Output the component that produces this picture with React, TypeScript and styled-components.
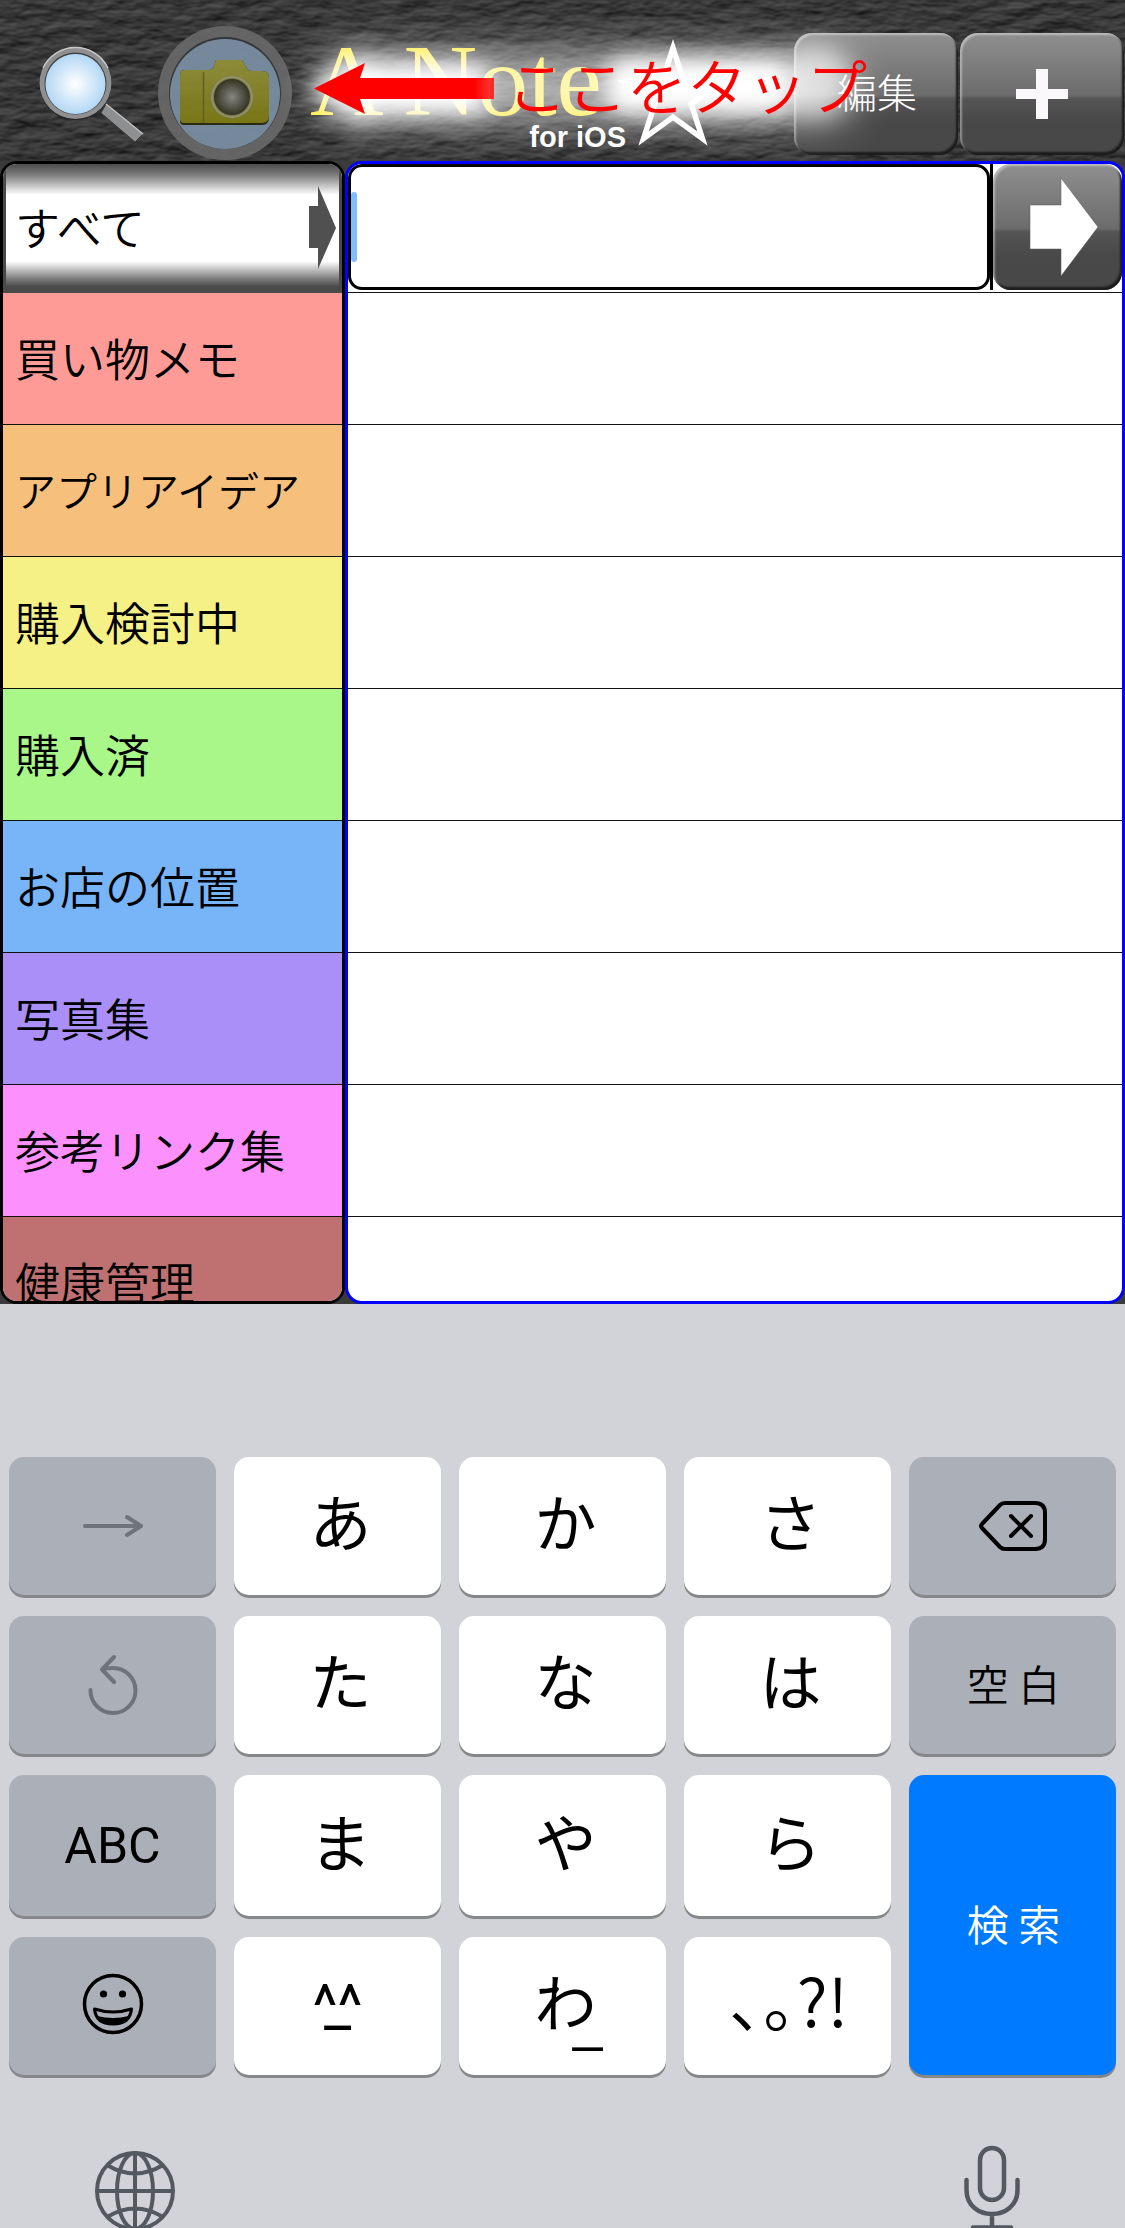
import React from "react";
import styled, { createGlobalStyle } from "styled-components";

const jp = `"Noto Sans CJK JP", sans-serif`;

const GlobalStyle = createGlobalStyle`
  * { box-sizing: border-box; }
  body { margin: 0; background: #d1d3d9; font-family: ${jp}; }
  button { margin: 0; padding: 0; border: 0; background: none; color: inherit; font: inherit; cursor: pointer; }
  ul { margin: 0; padding: 0; list-style: none; }
  svg { display: block; }
`;

const Page = styled.div`
  display: flex;
  flex-direction: column;
  height: 100vh;
  overflow: hidden;
  background: #3a3a3a;
`;

/* ---------- header ---------- */

const Header = styled.header`
  position: relative;
  display: flex;
  flex: none;
  align-items: flex-start;
  height: 161px;
  padding: 26px 1px 0 36px;
`;

const Leather = styled.svg`
  position: absolute;
  inset: 0;
  width: 100%;
  height: 100%;
`;

const ToolGroup = styled.div`
  position: relative;
  display: flex;
  gap: 11px;
  margin-right: 17px;
`;

const Brand = styled.div`
  position: relative;
  display: flex;
  flex: 1;
`;

const BrandText = styled.h1`
  display: flex;
  flex-direction: column;
  width: 316px;
  margin: 0;
  padding-top: 11px;
  white-space: nowrap;
`;

const BrandName = styled.span`
  font: 400 102px/88px "Liberation Serif", serif;
  color: #ffeb3f;
`;

const BrandSub = styled.span`
  align-self: flex-end;
  font: 700 29px/24px "Liberation Sans", sans-serif;
  color: #fff;
`;

const StarIcon = styled.svg`
  margin-left: -9px;
`;

const HeaderButtons = styled.div`
  position: relative;
  display: flex;
  gap: 2px;
  padding-top: 7px;
`;

const Glossy = styled.button`
  display: flex;
  align-items: center;
  justify-content: center;
  border-radius: 18px;
  background: linear-gradient(#8f8f8f, #6c6c6c 51%, #545454 54%, #484848 75%, #484848);
  box-shadow: inset 2px 2px 2px rgba(255, 255, 255, 0.4), inset -2px -3px 2px #1c1c1c;
  color: #fff;
`;

const HeaderButton = styled(Glossy)`
  width: 164px;
  height: 122px;
`;

const EditButton = styled(HeaderButton)`
  padding: 0 0 6px 2px;
  font-size: 40px;
  font-weight: 300;
`;

const Hint = styled.div`
  position: absolute;
  top: 0;
  left: 200px;
  width: 760px;
  height: 161px;
  overflow: hidden;
  pointer-events: none;
`;

const HintText = styled.p`
  position: absolute;
  top: 40px;
  left: 307px;
  margin: 0;
  font: 350 60px/88px ${jp};
  color: #f00;
  white-space: nowrap;
`;

/* ---------- panels ---------- */

const Panels = styled.main`
  display: flex;
  flex: 1;
  min-height: 0;
`;

const Panel = styled.section<{ $line: string; $grow?: boolean }>`
  flex: ${(p) => (p.$grow ? "1" : "0 0 345px")};
  min-width: 0;
  overflow: hidden;
  border: 3px solid ${(p) => p.$line};
  border-radius: 17px;
  background: #fff;
`;

const AllButton = styled.button`
  display: flex;
  align-items: center;
  justify-content: space-between;
  width: 100%;
  height: 129px;
  padding: 0 2px 0 9px;
  border: solid #4a4a4a;
  border-width: 0 3px 1px;
  background: linear-gradient(#4c4c4c, #787878 8%, #fff 24%, #fff 76%, #787878 90%, #4a4a4a 96%);
  font-size: 45px;
  font-weight: 350;
`;

const AllLabel = styled.span`
  padding-bottom: 4px;
`;

const CategoryButton = styled.button<{ $color: string; $small?: boolean }>`
  display: block;
  width: 100%;
  height: 132px;
  padding: 0 0 3px 12px;
  border-bottom: 1px solid #111;
  background: ${(p) => p.$color};
  font-size: ${(p) => (p.$small ? 41 : 45)}px;
  font-weight: 350;
  text-align: left;
  white-space: nowrap;
`;

const SearchRow = styled.form`
  display: flex;
  height: 129px;
  padding-bottom: 2px;
  border-bottom: 1px solid #111;
`;

const SearchBox = styled.label`
  display: flex;
  flex: 1;
  align-items: center;
  border: 3px solid #000;
  border-radius: 14px;
`;

const Caret = styled.span`
  width: 6px;
  height: 70px;
  border-radius: 3px;
  background: #80bcff;
`;

const SearchInput = styled.input`
  flex: 1;
  min-width: 0;
  height: 100%;
  border: 0;
  outline: 0;
  background: transparent;
  font: 300 44px ${jp};
`;

const GoWrap = styled.div`
  display: flex;
  border-left: 3px solid #000;
`;

const GoButton = styled(Glossy)`
  width: 129px;
  padding-left: 12px;
`;

const EmptyRow = styled.li`
  height: 132px;
  border-bottom: 1px solid #111;
`;

/* ---------- keyboard ---------- */

const Keyboard = styled.section`
  flex: none;
  padding-top: 153px;
  background: #d1d3d9;
`;

const Keys = styled.div`
  display: grid;
  grid-template-columns: repeat(5, 1fr);
  grid-template-rows: 138px 138px 141px 138px;
  gap: 21px 18px;
  padding: 0 9px;
`;

const Key = styled.button`
  display: grid;
  place-items: center;
  border-radius: 15px;
  background: #abafb8;
  box-shadow: 0 3px 0 #868789;
  color: #000;
`;

const WordKey = styled(Key)`
  padding: 0 0 6px 2px;
  font-size: 42px;
  font-weight: 350;
`;

const KanaKey = styled(Key)`
  padding: 0 0 12px 6px;
  background: #fff;
  font-size: 62px;
  font-weight: 400;
`;

const PunctuationKey = styled(KanaKey)`
  padding: 0 0 16px 4px;
  font-size: 66px;
  font-weight: 350;
`;

const LatinKey = styled(Key)`
  font-family: Roboto, sans-serif;
  font-size: 50px;
  font-weight: 400;
`;

const SearchKey = styled(WordKey)`
  grid-row: 3 / span 2;
  grid-column: 5;
  background: #007aff;
  color: #fff;
`;

const FaceKey = styled(Key)`
  background: #fff;
  font: 400 60px/60px Roboto, sans-serif;
`;

const FaceMark = styled.span`
  grid-area: 1 / 1;
`;

const SubMark = styled.span`
  position: absolute;
  right: 63px;
  bottom: 16px;
  font: 300 72px/72px Roboto, sans-serif;
`;

const WaKey = styled(KanaKey)`
  position: relative;
`;

const KeyboardFooter = styled.footer`
  display: flex;
  align-items: flex-start;
  justify-content: space-between;
  height: 153px;
  padding: 70px 103px 0 95px;
  overflow: hidden;
`;

const categories = [
  { name: "買い物メモ", color: "#ff9b96" },
  { name: "アプリアイデア", color: "#f6bf7c", small: true },
  { name: "購入検討中", color: "#f5f186" },
  { name: "購入済", color: "#a8f788" },
  { name: "お店の位置", color: "#77b5f8" },
  { name: "写真集", color: "#aa8ff8" },
  { name: "参考リンク集", color: "#fc91fd" },
  { name: "健康管理", color: "#be7170" },
];

function LeatherTexture() {
  return (
    <Leather aria-hidden="true">
      <filter id="leather" x="0" y="0" width="100%" height="100%" colorInterpolationFilters="sRGB">
        <feTurbulence type="fractalNoise" baseFrequency="0.035 0.08" numOctaves="3" seed="8" />
        <feDiffuseLighting surfaceScale="2" diffuseConstant="1" lightingColor="#5c5c5c">
          <feDistantLight azimuth="250" elevation="38" />
        </feDiffuseLighting>
      </filter>
      <rect width="100%" height="100%" filter="url(#leather)" />
    </Leather>
  );
}

function Magnifier() {
  return (
    <svg width="110" height="136" viewBox="36 26 110 136">
      <defs>
        <radialGradient id="lens">
          <stop offset="0" stopColor="#fff" />
          <stop offset="1" stopColor="#b3d7f5" />
        </radialGradient>
      </defs>
      <path d="M106 104 L143 134 L135 142 L101 113 Z" fill="#8d8f91" stroke="#3a3a3a" strokeWidth="1" />
      <path d="M106 104 L143 134" stroke="#c4c4c4" strokeWidth="1.5" />
      <circle cx="75.500" cy="84" r="36" fill="#222" />
      <circle cx="75.500" cy="83" r="36" fill="#8d8f91" />
      <path d="M43 68 A36 36 0 0 1 108 68" fill="none" stroke="#c8c8c8" strokeWidth="1.500" />
      <circle cx="75.500" cy="83.500" r="31" fill="#444" />
      <circle cx="75.500" cy="84" r="30" fill="url(#lens)" />
    </svg>
  );
}

function Camera() {
  return (
    <svg width="136" height="136" viewBox="157 26 136 136">
      <defs>
        <radialGradient id="glass">
          <stop offset="0" stopColor="#8c8c88" />
          <stop offset="0.55" stopColor="#5b5b50" />
          <stop offset="1" stopColor="#34341f" />
        </radialGradient>
        <linearGradient id="body" x1="0" y1="0" x2="0" y2="1">
          <stop offset="0" stopColor="#93923c" />
          <stop offset="1" stopColor="#7e7b14" />
        </linearGradient>
      </defs>
      <g opacity="0.93">
        <circle cx="225" cy="93" r="67" fill="#686868" />
        <circle cx="225" cy="93" r="56" fill="#343638" />
        <circle cx="225" cy="94" r="55" fill="#7b8fa3" />
        <path d="M180 75 Q180 70 185 70 H209 Q213 70 214 66 L216 60 H242 L246 67 Q248 71 252 71 H262 Q269 71 269 78 V117 Q269 125 262 125 H184 Q180 125 180 121 Z" fill="#292b10" />
        <path d="M180 75 Q180 70 185 70 H209 Q213 70 214 66 L216 60 H242 L246 67 Q248 71 252 71 H262 Q269 71 269 78 V115 Q269 123 262 123 H184 Q180 123 180 119 Z" fill="url(#body)" />
        <path d="M203.500 72 V123" stroke="#64631f" strokeWidth="1.500" />
        <circle cx="232" cy="97" r="21.500" fill="#7e7e4f" />
        <circle cx="232" cy="97" r="20" fill="none" stroke="#99986b" strokeWidth="2" />
        <circle cx="232" cy="97" r="18" fill="url(#glass)" />
      </g>
    </svg>
  );
}

function starPoints(cx: number, cy: number, outer: number) {
  return Array.from({ length: 10 }, (_, i) => {
    const r = i % 2 ? outer * 0.382 : outer;
    const a = (Math.PI * i) / 5 - Math.PI / 2;
    return `${cx + r * Math.cos(a)},${cy + r * Math.sin(a)}`;
  }).join(" ");
}

function Star() {
  return (
    <StarIcon width="112" height="124" viewBox="617 26 112 124" aria-hidden="true">
      <polygon points={starPoints(673, 98, 50)} fill="none" stroke="#fff" strokeWidth="5.500" strokeMiterlimit="8" />
    </StarIcon>
  );
}

function HintGlow() {
  return (
    <svg width="760" height="161" viewBox="200 0 760 161" aria-hidden="true">
      <defs>
        <filter id="soft" x="-30%" y="-150%" width="160%" height="400%">
          <feGaussianBlur stdDeviation="20" />
        </filter>
        <filter id="tight" x="-30%" y="-150%" width="160%" height="400%">
          <feGaussianBlur stdDeviation="11" />
        </filter>
        <linearGradient id="tail" x1="0" x2="1">
          <stop offset="0" stopColor="#f00" />
          <stop offset="1" stopColor="#f00" stopOpacity="0.75" />
        </linearGradient>
      </defs>
      <rect x="320" y="52" width="530" height="70" rx="24" fill="#fff" opacity="0.62" filter="url(#soft)" />
      <path d="M308 88 L362 54 L372 64 H486 V114 H372 L362 124 Z" fill="#fff" filter="url(#tight)" />
      <rect x="606" y="58" width="185" height="56" rx="18" fill="#fff" filter="url(#tight)" />
      <ellipse cx="815" cy="82" rx="36" ry="34" fill="#fff" opacity="0.5" filter="url(#tight)" />
      <path d="M314 88.500 L365 63 L360 78 H474 V99 H360 L365 114 Z" fill="#f00" />
      <rect x="474" y="78" width="20" height="21" fill="url(#tail)" />
    </svg>
  );
}

function Globe() {
  return (
    <svg width="80" height="88" viewBox="95 2145 80 88" fill="none" stroke="#53595f" strokeWidth="4">
      <circle cx="135" cy="2191" r="38" />
      <ellipse cx="135" cy="2191" rx="18" ry="38" />
      <path d="M135 2153 V2229 M97 2191 H173 M107 2165 Q135 2182 163 2165 M107 2217 Q135 2200 163 2217" />
    </svg>
  );
}

function Mic() {
  return (
    <svg width="60" height="88" viewBox="962 2145 60 88" fill="none" stroke="#53595f" strokeWidth="4.500" strokeLinecap="round">
      <rect x="980" y="2148" width="24" height="52" rx="12" />
      <path d="M966.500 2180 V2190 C966.500 2222 1017.500 2222 1017.500 2190 V2180 M992 2214 V2227 M973 2227.500 H1011" />
    </svg>
  );
}

const Kana = ({ children }: { children: string }) => <KanaKey type="button">{children}</KanaKey>;

export default function App() {
  return (
    <>
      <GlobalStyle />
      <Page>
        <Header>
          <LeatherTexture />
          <ToolGroup>
            <button type="button" aria-label="検索を開く">
              <Magnifier />
            </button>
            <button type="button" aria-label="カメラ">
              <Camera />
            </button>
          </ToolGroup>
          <Brand>
            <BrandText>
              <BrandName>A Note</BrandName>
              <BrandSub>for iOS</BrandSub>
            </BrandText>
            <Star />
          </Brand>
          <HeaderButtons>
            <EditButton type="button">編集</EditButton>
            <HeaderButton type="button" aria-label="追加">
              <svg width="52" height="50" viewBox="0 0 52 50">
                <path d="M20 0 H32 V20 H52 V30 H32 V50 H20 V30 H0 V20 H20 Z" fill="#faf8fa" />
              </svg>
            </HeaderButton>
          </HeaderButtons>
          <Hint>
            <HintGlow />
            <HintText>ここをタップ</HintText>
          </Hint>
        </Header>

        <Panels>
          <Panel $line="#000">
            <AllButton type="button">
              <AllLabel>すべて</AllLabel>
              <svg width="28" height="86" viewBox="0 0 28 86" aria-hidden="true">
                <path d="M0 21 H9 V1 L27 43 L9 84 V63 H0 Z" fill="#505050" />
              </svg>
            </AllButton>
            <ul>
              {categories.map((c) => (
                <li key={c.name}>
                  <CategoryButton type="button" $color={c.color} $small={c.small}>
                    {c.name}
                  </CategoryButton>
                </li>
              ))}
            </ul>
          </Panel>
          <Panel $line="#00f" $grow>
            <SearchRow onSubmit={(e) => e.preventDefault()}>
              <SearchBox>
                <Caret />
                <SearchInput type="text" aria-label="検索語" />
              </SearchBox>
              <GoWrap>
                <GoButton type="submit" aria-label="検索を実行">
                  <svg width="70" height="102" viewBox="0 0 70 102">
                    <path d="M1 29 H32 V2 L69 51 L32 100 V73 H1 Z" fill="#fff" stroke="#555" strokeWidth="0.500" />
                  </svg>
                </GoButton>
              </GoWrap>
            </SearchRow>
            <ul>
              {categories.map((c) => (
                <EmptyRow key={c.name} />
              ))}
            </ul>
          </Panel>
        </Panels>

        <Keyboard>
          <Keys>
            <Key type="button" aria-label="次候補">
              <svg width="62" height="26" viewBox="0 0 62 26" fill="none" stroke="#6f737b" strokeWidth="4" strokeLinecap="round" strokeLinejoin="round">
                <path d="M3 13 H59 M45 4 L59 13 L45 22" />
              </svg>
            </Key>
            <Kana>あ</Kana>
            <Kana>か</Kana>
            <Kana>さ</Kana>
            <Key type="button" aria-label="削除">
              <svg width="70" height="52" viewBox="0 0 70 52" fill="none" stroke="#000" strokeWidth="4" strokeLinecap="round" strokeLinejoin="round">
                <path d="M27 3 H57 Q67 3 67 13 V39 Q67 49 57 49 H27 Q24 49 22 47 L4 28 Q2 26 4 24 L22 5 Q24 3 27 3 Z" />
                <path d="M33 16 L53 36 M53 16 L33 36" />
              </svg>
            </Key>

            <Key type="button" aria-label="元に戻す">
              <svg width="50" height="62" viewBox="0 0 50 62" fill="none" stroke="#6f737b" strokeWidth="4" strokeLinecap="round" strokeLinejoin="round">
                <path d="M2.500 36 A22.500 22.500 0 1 0 25 14 Q19 14 14 15.500 M26 3 L14 15.500 L26 28" />
              </svg>
            </Key>
            <Kana>た</Kana>
            <Kana>な</Kana>
            <Kana>は</Kana>
            <WordKey type="button">空 白</WordKey>

            <LatinKey type="button">ABC</LatinKey>
            <Kana>ま</Kana>
            <Kana>や</Kana>
            <Kana>ら</Kana>
            <SearchKey type="button">検 索</SearchKey>

            <Key type="button" aria-label="絵文字">
              <svg width="64" height="68" viewBox="0 0 64 68">
                <circle cx="32" cy="32" r="28.500" fill="none" stroke="#000" strokeWidth="3.500" />
                <circle cx="22.500" cy="22" r="3.600" />
                <circle cx="41.500" cy="22" r="3.600" />
                <path d="M13.500 37 Q32 43 50.500 37 Q49 52 32 52 Q15 52 13.500 37 Z" fill="none" stroke="#000" strokeWidth="3" strokeLinejoin="round" />
                <path d="M16 44 Q32 48 48 44 Q44 52 32 52 Q20 52 16 44 Z" />
              </svg>
            </Key>
            <FaceKey type="button">
              <FaceMark>^^</FaceMark>
              <FaceMark>_</FaceMark>
            </FaceKey>
            <WaKey type="button">
              わ<SubMark>_</SubMark>
            </WaKey>
            <PunctuationKey type="button">､｡?!</PunctuationKey>
          </Keys>
          <KeyboardFooter>
            <button type="button" aria-label="キーボード切替">
              <Globe />
            </button>
            <button type="button" aria-label="音声入力">
              <Mic />
            </button>
          </KeyboardFooter>
        </Keyboard>
      </Page>
    </>
  );
}
